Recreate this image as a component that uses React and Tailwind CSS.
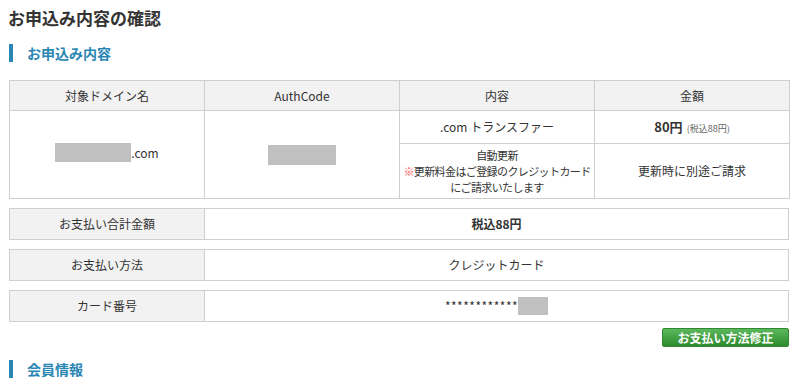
import React from 'react'

const Redacted = ({ w, h }) => <span className={`inline-block bg-[#c0c0c0] align-middle ${w} ${h}`}></span>

const SectionTitle = ({ children }) => (
  <div className="flex items-center h-[18px]">
    <span className="block w-[4px] h-[18px] bg-[#2a86b3]"></span>
    <span className="ml-[14px] text-[14px] font-bold text-[#2a86b3] leading-none">{children}</span>
  </div>
)

const SummaryRow = ({ label, children }) => (
  <table className="w-[780px] border-collapse table-fixed text-[12px] text-[#333]">
    <tbody>
      <tr className="h-[31px]">
        <td className="w-[195px] border border-[#cfcfcf] bg-[#f2f2f2] text-center leading-[16px]">{label}</td>
        <td className="border border-[#cfcfcf] text-center leading-[16px]">{children}</td>
      </tr>
    </tbody>
  </table>
)

export default function App() {
  const cell = "border border-[#cfcfcf] text-center"
  return (
    <div className="w-[800px] h-[386px] overflow-hidden bg-white text-[#333] font-['Noto_Sans_CJK_JP','Noto_Sans',sans-serif]">
      <h1 className="pl-[8px] pt-[6px] text-[17px] font-bold leading-[24px] text-[#333]">お申込み内容の確認</h1>
      <div className="pl-[9px] mt-[14px]">
        <SectionTitle>お申込み内容</SectionTitle>
      </div>

      <div className="pl-[9px] mt-[18px]">
        <table className="w-[781px] border-collapse table-fixed text-[12px] text-[#333]">
          <thead>
            <tr className="h-[30px] bg-[#f2f2f2]">
              <th className={`${cell} font-normal`}>対象ドメイン名</th>
              <th className={`${cell} font-normal`}>AuthCode</th>
              <th className={`${cell} font-normal`}>内容</th>
              <th className={`${cell} font-normal`}>金額</th>
            </tr>
          </thead>
          <tbody>
            <tr className="h-[33px]">
              <td rowSpan={2} className={cell}>
                <span className="inline-flex items-center">
                  <Redacted w="w-[76px]" h="h-[19px]" />
                  <span>.com</span>
                </span>
              </td>
              <td rowSpan={2} className={cell}>
                <Redacted w="w-[68px]" h="h-[20px]" />
              </td>
              <td className={cell}>.com トランスファー</td>
              <td className={cell}>
                <span className="font-bold text-[13px]">80円</span>
                <span className="ml-[4px] text-[9px] text-[#666]">(税込88円)</span>
              </td>
            </tr>
            <tr className="h-[55px]">
              <td className={`${cell} leading-[16px] text-[11px] tracking-[-0.6px] whitespace-nowrap`}>
                自動更新
                <br />
                <span className="text-[#ff4d4d]">※</span>更新料金はご登録のクレジットカード
                <br />
                にご請求いたします
              </td>
              <td className={cell}>更新時に別途ご請求</td>
            </tr>
          </tbody>
        </table>
      </div>

      <div className="pl-[9px] mt-[9px] flex flex-col gap-[9px]">
        <SummaryRow label="お支払い合計金額">
          <span className="font-bold">税込88円</span>
        </SummaryRow>
        <SummaryRow label="お支払い方法">クレジットカード</SummaryRow>
        <SummaryRow label="カード番号">
          <span className="inline-flex items-center">
            <span className="tracking-[0.5px]">************</span>
            <Redacted w="w-[30px]" h="h-[18px]" />
          </span>
        </SummaryRow>
      </div>

      <div className="flex justify-end pr-[11px] mt-[6px]">
        <button className="w-[127px] h-[19px] rounded-[2px] border border-[#2f8a2f] bg-gradient-to-b from-[#5cb85c] to-[#2d8a2d] text-white text-[12px] font-bold leading-none">
          お支払い方法修正
        </button>
      </div>

      <div className="pl-[9px] mt-[13px]">
        <SectionTitle>会員情報</SectionTitle>
      </div>
    </div>
  )
}
